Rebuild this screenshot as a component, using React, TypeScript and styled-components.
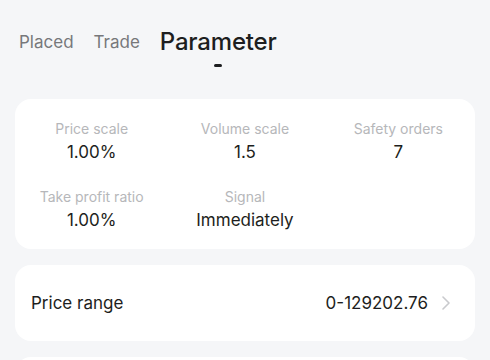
import React from "react";
import styled, { createGlobalStyle } from "styled-components";

const Global = createGlobalStyle`
  html, body { margin: 0; padding: 0; background: #f5f6f8; }
  body { font-family: Inter, "Noto Sans", sans-serif; -webkit-font-smoothing: antialiased; }
`;

const Page = styled.div`
  padding: 0 15px;
  display: flex;
  flex-direction: column;
`;

const Tabs = styled.div`
  display: flex;
  align-items: center;
  gap: 20px;
  padding: 26px 0 0 4px;
  height: 32px;
`;

const Tab = styled.div<{ $active?: boolean }>`
  position: relative;
  font-size: ${(p) => (p.$active ? "24px" : "17px")};
  font-weight: ${(p) => (p.$active ? 500 : 400)};
  color: ${(p) => (p.$active ? "#1d1e20" : "#77787b")};
  line-height: 32px;
  letter-spacing: ${(p) => (p.$active ? "-0.2px" : "0")};
`;

const Indicator = styled.span`
  position: absolute;
  left: 50%;
  top: 38px;
  width: 8px;
  height: 3px;
  margin-left: -4px;
  border-radius: 2px;
  background: #1d1e20;
`;

const Card = styled.div`
  background: #ffffff;
  border-radius: 16px;
`;

const StatsCard = styled(Card)`
  margin-top: 41px;
  padding: 20px 0 18px;
  display: grid;
  grid-template-columns: repeat(3, 1fr);
  row-gap: 24px;
`;

const Stat = styled.div`
  display: flex;
  flex-direction: column;
  align-items: center;
  gap: 2px;
`;

const Label = styled.div`
  font-size: 14px;
  line-height: 20px;
  color: #b6b7ba;
`;

const Value = styled.div`
  font-size: 17px;
  line-height: 22px;
  color: #1d1e20;
`;

const RowCard = styled(Card)`
  margin-top: 16px;
  height: 76px;
  display: flex;
  align-items: center;
  padding: 0 25px 0 16px;
`;

const RowLabel = styled.div`
  flex: 1;
  font-size: 17px;
  color: #1d1e20;
`;

const RowValue = styled.div`
  font-size: 17px;
  color: #1d1e20;
  margin-right: 14px;
`;

const NextCard = styled(Card)`
  margin-top: 16px;
  height: 60px;
`;

const Chevron = () => (
  <svg width="8" height="14" viewBox="0 0 8 14" fill="none">
    <path d="M1 1l6 6-6 6" stroke="#c9cacd" strokeWidth="1.6" strokeLinecap="round" strokeLinejoin="round" />
  </svg>
);

const stats = [
  { label: "Price scale", value: "1.00%" },
  { label: "Volume scale", value: "1.5" },
  { label: "Safety orders", value: "7" },
  { label: "Take profit ratio", value: "1.00%" },
  { label: "Signal", value: "Immediately" },
];

export default function App() {
  return (
    <>
      <Global />
      <Page>
        <Tabs>
          <Tab>Placed</Tab>
          <Tab>Trade</Tab>
          <Tab $active>
            Parameter
            <Indicator />
          </Tab>
        </Tabs>
        <StatsCard>
          {stats.map((s) => (
            <Stat key={s.label}>
              <Label>{s.label}</Label>
              <Value>{s.value}</Value>
            </Stat>
          ))}
        </StatsCard>
        <RowCard>
          <RowLabel>Price range</RowLabel>
          <RowValue>0-129202.76</RowValue>
          <Chevron />
        </RowCard>
        <NextCard />
      </Page>
    </>
  );
}
